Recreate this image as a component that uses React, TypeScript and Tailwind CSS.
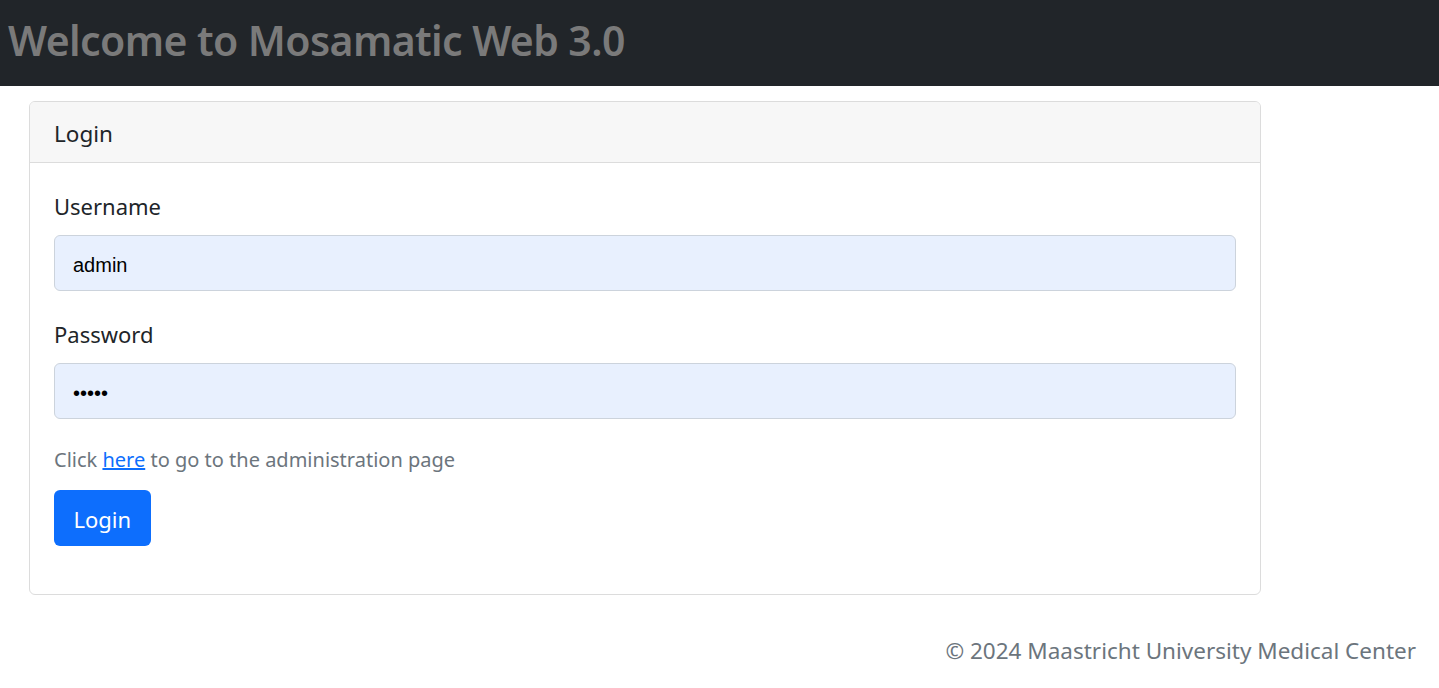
import { useState } from "react";

export default function App() {
  const [username, setUsername] = useState("admin");
  const [password, setPassword] = useState("admin");

  return (
    <div className="min-h-screen bg-white font-['Noto_Sans',sans-serif] text-[#212529]">
      <header className="h-[86px] bg-[#212529] flex items-center px-2">
        <h1 className="text-[41px] font-semibold text-[#7a7a7a] tracking-[-0.6px] leading-none -mt-[6px]">
          Welcome to Mosamatic Web 3.0
        </h1>
      </header>

      <main className="pt-[15px] pl-[29px] pr-[178px]">
        <div className="border border-[#dcdcdc] rounded-md overflow-hidden">
          <div className="bg-[#f7f7f7] border-b border-[#dcdcdc] px-6 pt-[17px] pb-[13px] text-[22.5px] leading-[30px]">
            Login
          </div>
          <form
            className="px-6 pt-[28px] pb-12 text-[20px] leading-[30px]"
            onSubmit={(e) => e.preventDefault()}
          >
            <label className="block mb-[14px] text-[22px]">Username</label>
            <input
              value={username}
              onChange={(e) => setUsername(e.target.value)}
              className="w-full h-[56px] rounded-md border border-[#ccd3dc] bg-[#e8f0fe] pl-[18px] pt-[5px] text-[20px] font-['Liberation_Sans',sans-serif] text-black outline-none"
            />
            <label className="block mt-[28px] mb-[14px] text-[22px]">Password</label>
            <input
              type="password"
              value={password}
              onChange={(e) => setPassword(e.target.value)}
              className="w-full h-[56px] rounded-md border border-[#ccd3dc] bg-[#e8f0fe] pl-[18px] pt-[5px] text-[20px] font-['Liberation_Sans',sans-serif] text-black outline-none"
            />
            <p className="mt-[26px] text-[#6c757d]">
              Click{" "}
              <a href="#" className="text-[#0d6efd] underline">
                here
              </a>{" "}
              to go to the administration page
            </p>
            <button
              type="submit"
              className="mt-[15px] h-[56px] px-[19.5px] pt-[1px] rounded-md bg-[#0d6efd] text-white text-[22px]"
            >
              Login
            </button>
          </form>
        </div>
      </main>

      <footer className="pt-[41px] pr-[23px] text-right text-[22.5px] leading-[30px] text-[#6c757d]">
        © 2024 Maastricht University Medical Center
      </footer>
    </div>
  );
}
